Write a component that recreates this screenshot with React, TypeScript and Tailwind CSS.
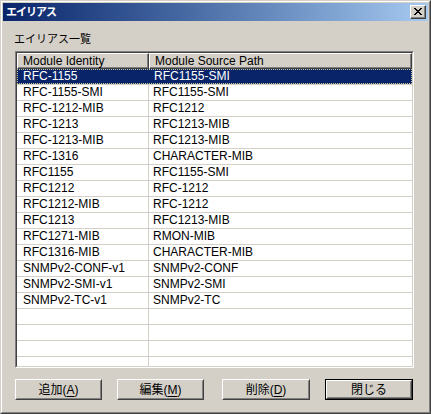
import React from "react";

const rows: [string, string][] = [
  ["RFC-1155", "RFC1155-SMI"],
  ["RFC-1155-SMI", "RFC1155-SMI"],
  ["RFC-1212-MIB", "RFC1212"],
  ["RFC-1213", "RFC1213-MIB"],
  ["RFC-1213-MIB", "RFC1213-MIB"],
  ["RFC-1316", "CHARACTER-MIB"],
  ["RFC1155", "RFC1155-SMI"],
  ["RFC1212", "RFC-1212"],
  ["RFC1212-MIB", "RFC-1212"],
  ["RFC1213", "RFC1213-MIB"],
  ["RFC1271-MIB", "RMON-MIB"],
  ["RFC1316-MIB", "CHARACTER-MIB"],
  ["SNMPv2-CONF-v1", "SNMPv2-CONF"],
  ["SNMPv2-SMI-v1", "SNMPv2-SMI"],
  ["SNMPv2-TC-v1", "SNMPv2-TC"],
];

const Button = ({
  label,
  mnemonic,
  isDefault,
  className,
}: {
  label: string;
  mnemonic?: string;
  isDefault?: boolean;
  className?: string;
}) => {
  const inner = (
    <div className="h-full w-full border border-t-white border-l-white border-r-[#404040] border-b-[#404040]">
      <div className="h-full w-full flex items-center justify-center border border-t-[#d4d0c8] border-l-[#d4d0c8] border-r-[#808080] border-b-[#808080] text-black">
        {label}
        {mnemonic && (
          <>
            (<span className="underline underline-offset-2">{mnemonic}</span>)
          </>
        )}
      </div>
    </div>
  );
  return (
    <div className={"h-[21px] " + (className ?? "")}>
      {isDefault ? <div className="h-full w-full border border-black">{inner}</div> : inner}
    </div>
  );
};

export default function App() {
  return (
    <div className="w-[431px] h-[414px] bg-[#d4d0c8] border border-t-[#d4d0c8] border-l-[#d4d0c8] border-r-[#404040] border-b-[#404040] font-['Liberation_Sans','Noto_Sans_CJK_JP',sans-serif] text-[12px] select-none">
      <div className="h-full w-full border border-t-white border-l-white border-r-[#808080] border-b-[#808080] p-px">
        {/* title bar */}
        <div className="h-[18px] flex items-center justify-between pl-[3px] pr-[2px] bg-gradient-to-r from-[#0a246a] to-[#a6caf0]">
          <span className="text-white font-bold text-[11px] tracking-[-1px] leading-none">エイリアス</span>
          <div className="w-[16px] h-[14px] bg-[#d4d0c8] border border-t-white border-l-white border-r-[#404040] border-b-[#404040]">
            <div className="h-full w-full flex items-center justify-center border-r border-b border-r-[#808080] border-b-[#808080]">
              <svg width="8" height="7" viewBox="0 0 8 7" shapeRendering="crispEdges">
                <path d="M0 0h2v1h-2zM6 0h2v1h-2zM1 1h2v1h-2zM5 1h2v1h-2zM2 2h4v1h-4zM3 3h2v1h-2zM2 4h4v1h-4zM1 5h2v1h-2zM5 5h2v1h-2zM0 6h2v1h-2zM6 6h2v1h-2z" fill="#000" />
              </svg>
            </div>
          </div>
        </div>

        {/* content */}
        <div className="pl-[12px] pt-[10px]">
          <div className="h-[16px] leading-[16px] text-[11px] text-black -ml-px">エイリアス一覧</div>
          <div className="mt-[4px] w-[399px] h-[317px] border border-t-[#808080] border-l-[#808080] border-r-white border-b-white">
            <div className="h-full w-full border border-t-[#404040] border-l-[#404040] border-r-[#d4d0c8] border-b-[#d4d0c8] bg-white overflow-hidden">
              {/* header */}
              <div className="flex h-[16px]">
                <div className="w-[132px] h-full border-t border-l border-t-white border-l-white border-r border-b border-r-[#404040] border-b-[#404040] bg-[#d4d0c8]">
                  <div className="h-full border-r border-b border-r-[#808080] border-b-[#808080] pl-[5px] leading-[14px] text-black whitespace-nowrap">
                    Module Identity
                  </div>
                </div>
                <div className="flex-1 h-full border-t border-l border-t-white border-l-white border-r border-b border-r-[#404040] border-b-[#404040] bg-[#d4d0c8]">
                  <div className="h-full border-r border-b border-r-[#808080] border-b-[#808080] pl-[5px] leading-[14px] text-black whitespace-nowrap">
                    Module Source Path
                  </div>
                </div>
              </div>
              {/* rows */}
              {rows.map(([id, path], i) => (
                <div key={i} className="flex h-[16px] border-b border-[#d4d0c8]">
                  {i === 0 ? (
                    <div className="flex w-full h-full bg-[#0a246a] text-white outline-1 outline-dotted outline-[#c8c8a0] -outline-offset-1">
                      <div className="w-[132px] pl-[6px] leading-[15px] whitespace-nowrap">{id}</div>
                      <div className="flex-1 pl-[5px] leading-[15px] whitespace-nowrap">{path}</div>
                    </div>
                  ) : (
                    <>
                      <div className="w-[132px] border-r border-[#d4d0c8] pl-[6px] leading-[15px] text-black whitespace-nowrap">{id}</div>
                      <div className="flex-1 pl-[4px] leading-[15px] text-black whitespace-nowrap">{path}</div>
                    </>
                  )}
                </div>
              ))}
              {[0, 1, 2, 3].map((i) => (
                <div key={"e" + i} className="flex h-[16px] border-b border-[#d4d0c8]">
                  <div className="w-[132px] border-r border-[#d4d0c8]" />
                  <div className="flex-1" />
                </div>
              ))}
            </div>
          </div>

          {/* buttons */}
          <div className="flex mt-[11px]">
            <Button label="追加" mnemonic="A" className="w-[87px]" />
            <Button label="編集" mnemonic="M" className="w-[87px] ml-[15px]" />
            <Button label="削除" mnemonic="D" className="w-[88px] ml-[18px]" />
            <Button label="閉じる" isDefault className="w-[88px] ml-[15px]" />
          </div>
        </div>
      </div>
    </div>
  );
}
